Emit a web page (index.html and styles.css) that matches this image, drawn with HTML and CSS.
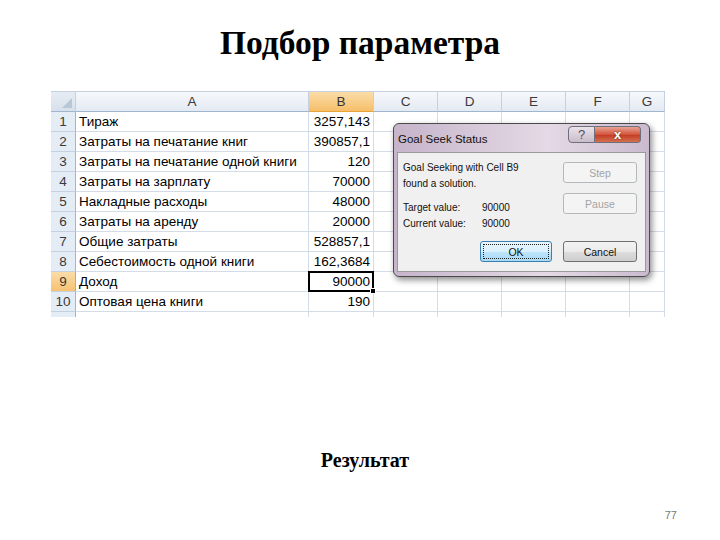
FILE: index.html
```html
<!DOCTYPE html>
<html>
<head>
<meta charset="utf-8">
<link rel="stylesheet" href="styles.css">
</head>
<body>
<div class="slide">
  <h1 class="title">Подбор параметра</h1>
  <div class="sheet">
    <div class="grid">
      <div class="ch corner"><span class="tri"></span></div>
      <div class="ch">A</div>
      <div class="ch sel">B</div>
      <div class="ch">C</div>
      <div class="ch">D</div>
      <div class="ch">E</div>
      <div class="ch">F</div>
      <div class="ch">G</div>

      <div class="rh">1</div><div class="c">Тираж</div><div class="c n">3257,143</div><div class="c"></div><div class="c"></div><div class="c"></div><div class="c"></div><div class="c"></div>
      <div class="rh">2</div><div class="c">Затраты на печатание книг</div><div class="c n">390857,1</div><div class="c"></div><div class="c"></div><div class="c"></div><div class="c"></div><div class="c"></div>
      <div class="rh">3</div><div class="c">Затраты на печатание одной книги</div><div class="c n">120</div><div class="c"></div><div class="c"></div><div class="c"></div><div class="c"></div><div class="c"></div>
      <div class="rh">4</div><div class="c">Затраты на зарплату</div><div class="c n">70000</div><div class="c"></div><div class="c"></div><div class="c"></div><div class="c"></div><div class="c"></div>
      <div class="rh">5</div><div class="c">Накладные расходы</div><div class="c n">48000</div><div class="c"></div><div class="c"></div><div class="c"></div><div class="c"></div><div class="c"></div>
      <div class="rh">6</div><div class="c">Затраты на аренду</div><div class="c n">20000</div><div class="c"></div><div class="c"></div><div class="c"></div><div class="c"></div><div class="c"></div>
      <div class="rh">7</div><div class="c">Общие затраты</div><div class="c n">528857,1</div><div class="c"></div><div class="c"></div><div class="c"></div><div class="c"></div><div class="c"></div>
      <div class="rh">8</div><div class="c">Себестоимость одной книги</div><div class="c n">162,3684</div><div class="c"></div><div class="c"></div><div class="c"></div><div class="c"></div><div class="c"></div>
      <div class="rh sel">9</div><div class="c">Доход</div><div class="c n active">90000<span class="handle"></span></div><div class="c"></div><div class="c"></div><div class="c"></div><div class="c"></div><div class="c"></div>
      <div class="rh">10</div><div class="c">Оптовая цена книги</div><div class="c n">190</div><div class="c"></div><div class="c"></div><div class="c"></div><div class="c"></div><div class="c"></div>
      <div class="rh part"></div><div class="c part"></div><div class="c part"></div><div class="c part"></div><div class="c part"></div><div class="c part"></div><div class="c part"></div><div class="c part"></div>
    </div>

    <div class="dialog">
      <div class="titlebar">
        <span class="dtitle">Goal Seek Status</span>
        <div class="tbtns">
          <span class="tb help">?</span>
          <span class="tb close">x</span>
        </div>
      </div>
      <div class="panel">
        <div class="top">
          <div class="msg">
            <div>Goal Seeking with Cell B9</div>
            <div>found a solution.</div>
            <div class="vals"><span class="lbl">Target value:</span>90000</div>
            <div><span class="lbl">Current value:</span>90000</div>
          </div>
          <div class="side">
            <span class="btn dis">Step</span>
            <span class="btn dis">Pause</span>
          </div>
        </div>
        <div class="bottom">
          <span class="btn ok"><span class="focus">OK</span></span>
          <span class="btn cancel">Cancel</span>
        </div>
      </div>
    </div>
  </div>
  <h2 class="result">Результат</h2>
  <div class="pagenum">77</div>
</div>
</body>
</html>
```
FILE: styles.css
```css
* { box-sizing: border-box; }
body {
  margin: 0;
  width: 720px;
  height: 540px;
  background: #fff;
  font-family: "Liberation Serif", "Times New Roman", serif;
  overflow: hidden;
}
.slide {
  display: flex;
  flex-direction: column;
  height: 540px;
}
.title {
  margin: 23px 0 0;
  height: 40px;
  line-height: 40px;
  text-align: center;
  font-size: 33.5px;
  font-weight: bold;
  color: #000;
}
.sheet {
  position: relative;
  margin: 28px 0 0 51px;
  width: 614px;
  height: 225px;
}
.grid {
  display: grid;
  grid-template-columns: 25px 233px 65px 64px 64px 64px 64px 35px;
  grid-template-rows: 20px repeat(10, 20px) 5px;
  font-family: "Liberation Sans", Arial, sans-serif;
  font-size: 13.5px;
  color: #000;
  border-top: 1px solid #c5d1e0;
}
.ch {
  background: linear-gradient(#f6f8fb, #e4eaf2);
  border-right: 1px solid #c5d1e0;
  border-bottom: 1px solid #9eb6ce;
  text-align: center;
  line-height: 19px;
  color: #3a3a3a;
}
.ch.sel {
  background: linear-gradient(#fbdca8, #f6bf6a);
  border-bottom: 1px solid #e9a437;
  color: #333;
}
.corner {
  position: relative;
  background: linear-gradient(#e6ecf3, #d7e0eb);
}
.tri {
  position: absolute;
  right: 3px;
  bottom: 3px;
  width: 0;
  height: 0;
  border-left: 10px solid transparent;
  border-bottom: 10px solid #b9c6d6;
}
.rh {
  background: #e4ecf6;
  border-right: 1px solid #9eb6ce;
  border-bottom: 1px solid #c5d1e0;
  text-align: center;
  line-height: 19px;
  color: #3a3a3a;
}
.rh.sel {
  background: linear-gradient(#fbdca8, #f6c272);
  border-right-color: #e9a437;
}
.c {
  border-right: 1px solid #d4dce8;
  border-bottom: 1px solid #d4dce8;
  padding: 0 3px;
  line-height: 19px;
  white-space: nowrap;
  overflow: hidden;
}
.c.n { text-align: right; }
.part { border-bottom: none; }
.c.active {
  position: relative;
  overflow: visible;
  border: 2px solid #000;
  margin: -1px 0 0 -1px;
  line-height: 17px;
  padding-right: 2px;
}
.handle {
  position: absolute;
  right: -4px;
  bottom: -4px;
  width: 6px;
  height: 6px;
  background: #000;
  border: 1px solid #fff;
}

/* Dialog */
.dialog {
  position: absolute;
  left: 342px;
  top: 32px;
  width: 257px;
  height: 154px;
  border: 1px solid #4a4a4a;
  border-radius: 6px;
  background: linear-gradient(90deg, #c6b4cb 0%, #ddd0de 45%, #e4d9e5 60%, #cbbacf 100%);
  box-shadow: 2px 3px 6px rgba(0,0,0,0.45);
  padding: 0 3px 4px 3px;
  display: flex;
  flex-direction: column;
  font-family: "Liberation Sans", Arial, sans-serif;
}
.titlebar {
  height: 28px;
  display: flex;
  justify-content: space-between;
  align-items: flex-start;
}
.dtitle {
  margin: 9px 0 0 1px;
  font-size: 11.5px;
  color: #111;
}
.tbtns {
  display: flex;
  margin-top: 2px;
  margin-right: 5px;
}
.tb {
  height: 17px;
  display: flex;
  align-items: center;
  justify-content: center;
  font-weight: bold;
  font-size: 12px;
  border: 1px solid #6e6e7c;
}
.help {
  width: 27px;
  border-radius: 4px 0 0 4px;
  background: linear-gradient(#eae3ea, #c9bccb);
  color: #55505a;
  font-weight: normal;
  font-size: 13px;
}
.close {
  width: 46px;
  border-left: none;
  border-radius: 0 4px 4px 0;
  background: linear-gradient(#e8a493, #d3553e 50%, #c13a22 51%, #d4704f);
  color: #fff;
  font-size: 13px;
  text-shadow: 0 0 2px #702010;
}
.panel {
  flex: 1;
  background: #f0f0f0;
  border: 1px solid #9a9a9a;
  padding: 0 8px 0 5px;
  display: flex;
  flex-direction: column;
  font-size: 10px;
  color: #111;
}
.top {
  display: flex;
  justify-content: space-between;
  height: 80px;
}
.msg {
  padding-top: 7px;
  line-height: 16px;
}
.vals { margin-top: 8px; }
.lbl {
  display: inline-block;
  width: 79px;
}
.side {
  display: flex;
  flex-direction: column;
  gap: 10px;
  padding-top: 9px;
}
.btn {
  display: flex;
  align-items: center;
  justify-content: center;
  width: 74px;
  height: 21px;
  border-radius: 3px;
  font-size: 10.5px;
}
.btn.dis {
  border: 1px solid #b5b9bc;
  background: #f4f4f4;
  color: #a3a3a3;
}
.bottom {
  display: flex;
  justify-content: flex-end;
  gap: 11px;
  margin-top: 8px;
}
.btn.ok {
  width: 72px;
  border: 1px solid #3c7fb1;
  background: linear-gradient(#eaf6fd, #d9f0fc 50%, #bee6fd 51%, #a7d9f5);
  padding: 2px;
}
.focus {
  width: 100%;
  height: 100%;
  display: flex;
  align-items: center;
  justify-content: center;
  border: 1px dotted #222;
}
.btn.cancel {
  border: 1px solid #707070;
  background: linear-gradient(#f2f2f2, #ebebeb 50%, #dddddd 51%, #cfcfcf);
}
.result {
  margin: 133px 0 0;
  padding-left: 10px;
  height: 22px;
  line-height: 22px;
  text-align: center;
  font-size: 20px;
  font-weight: bold;
}
.pagenum {
  margin-top: 37px;
  text-align: right;
  padding-right: 43px;
  font-family: "Liberation Sans", Arial, sans-serif;
  font-size: 11px;
  line-height: 14px;
  color: #777;
}
```
